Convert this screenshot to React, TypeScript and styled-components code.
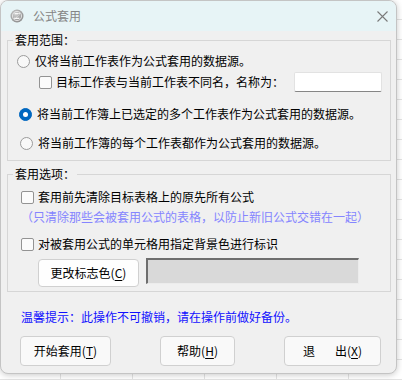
import React from "react";
import styled, { createGlobalStyle } from "styled-components";

const GlobalStyle = createGlobalStyle`
  html, body {
    margin: 0;
    padding: 0;
    width: 402px;
    height: 380px;
    overflow: hidden;
    background-color: #ffffff;
    background-image:
      linear-gradient(to right, #e3e3e3 1px, transparent 1px),
      linear-gradient(to bottom, #e3e3e3 1px, transparent 1px);
    background-size: 72px 20px;
    background-position: 60px 0, 0 19px;
    font-family: "Noto Sans CJK SC", "Noto Sans", sans-serif;
  }
`;

const Dialog = styled.div`
  width: 397px;
  height: 374px;
  box-sizing: border-box;
  background: #f0f0f0;
  border: 1px solid #c4c4c4;
  border-radius: 8px;
  box-shadow: 0 1px 6px rgba(0, 0, 0, 0.22);
  display: flex;
  flex-direction: column;
  overflow: hidden;
  font-size: 12px;
  color: #000;
`;

const TitleBar = styled.div`
  height: 30px;
  flex-shrink: 0;
  background: #e7f4f6;
  display: flex;
  align-items: center;
  padding: 0 0 0 9px;
`;

const TitleText = styled.span`
  margin-left: 9px;
  color: #858585;
  font-size: 12px;
  line-height: 16px;
`;

const CloseBtn = styled.div`
  margin-left: auto;
  width: 28px;
  height: 30px;
  display: flex;
  align-items: center;
  justify-content: center;
`;

const Body = styled.div`
  flex: 1;
  display: flex;
  flex-direction: column;
  padding: 1px 5px 0 6px;
`;

const Group = styled.fieldset<{ gap?: number }>`
  margin: ${(p) => p.gap || 0}px 0 0 0;
  padding: 0;
  border: 1px solid #d6d6d6;
  min-width: 0;
`;

const Legend = styled.legend`
  margin-left: 5px;
  padding: 0 2px;
  font-size: 12px;
  line-height: 16px;
  color: #000;
`;

const GroupContent = styled.div<{ top: number; bottom: number }>`
  display: flex;
  flex-direction: column;
  padding: ${(p) => p.top}px 0 ${(p) => p.bottom}px 0;
`;

const Row = styled.div<{ indent: number; mt?: number; h?: number }>`
  display: flex;
  align-items: center;
  height: ${(p) => p.h || 20}px;
  margin-top: ${(p) => p.mt || 0}px;
  padding-left: ${(p) => p.indent}px;
  white-space: nowrap;
  line-height: 16px;
`;

const Radio = styled.span<{ checked?: boolean }>`
  width: 13px;
  height: 13px;
  box-sizing: border-box;
  border-radius: 50%;
  flex-shrink: 0;
  margin-right: 5px;
  border: 1px solid ${(p) => (p.checked ? "#0067c0" : "#9b9b9b")};
  background: ${(p) => (p.checked ? "#0067c0" : "#f8f8f8")};
  display: flex;
  align-items: center;
  justify-content: center;
  &::after {
    content: "";
    display: ${(p) => (p.checked ? "block" : "none")};
    width: 5px;
    height: 5px;
    border-radius: 50%;
    background: #ffffff;
  }
`;

const Check = styled.span`
  width: 13px;
  height: 13px;
  box-sizing: border-box;
  border: 1px solid #939393;
  border-radius: 2px;
  background: #fbfbfb;
  flex-shrink: 0;
  margin-right: 4px;
`;

const NameInput = styled.div`
  width: 88px;
  height: 20px;
  box-sizing: border-box;
  margin-left: 10px;
  background: #ffffff;
  border: 1px solid #e2e2e2;
  border-bottom: 1px solid #868686;
  border-radius: 2px;
`;

const Note = styled.div`
  height: 20px;
  line-height: 20px;
  padding-left: 13px;
  color: #8585ff;
  white-space: nowrap;
`;

const ColorRow = styled.div`
  display: flex;
  align-items: flex-start;
  margin-top: 5px;
  padding-left: 30px;
  gap: 7px;
`;

const Button = styled.div<{ w: number; h: number; bg?: string }>`
  width: ${(p) => p.w}px;
  height: ${(p) => p.h}px;
  box-sizing: border-box;
  background: ${(p) => p.bg || "#fdfdfd"};
  border: 1px solid #d0d0d0;
  border-radius: 4px;
  display: flex;
  align-items: center;
  justify-content: center;
  font-size: 12px;
  line-height: 16px;
  white-space: nowrap;
  u {
    text-underline-offset: 2px;
  }
`;

const ColorSwatch = styled.div`
  width: 213px;
  height: 26px;
  margin-top: -1px;
  box-sizing: border-box;
  background: #d9d9d9;
  border-top: 2px solid #6e6e6e;
  border-left: 2px solid #6e6e6e;
  border-right: 1px solid #ececec;
  border-bottom: 1px solid #ececec;
`;

const Hint = styled.div`
  margin-top: 15px;
  height: 20px;
  line-height: 20px;
  padding-left: 14px;
  color: #1010ff;
  white-space: nowrap;
`;

const ButtonBar = styled.div`
  display: flex;
  justify-content: space-between;
  margin-top: 9px;
  padding: 0 10px 0 13px;
`;

const Gap = styled.span<{ w: number }>`
  display: inline-block;
  width: ${(p) => p.w}px;
`;

const AppIcon = () => (
  <svg width="14" height="14" viewBox="0 0 14 14">
    <defs>
      <radialGradient id="ig" cx="40%" cy="35%" r="70%">
        <stop offset="0" stopColor="#d0d0d0" />
        <stop offset="1" stopColor="#8a8a8a" />
      </radialGradient>
    </defs>
    <circle cx="7" cy="7" r="6.5" fill="url(#ig)" />
    <circle cx="7" cy="7" r="4.6" fill="none" stroke="#ededed" strokeWidth="0.8" />
    <path d="M4.6 4.6 H9.3 L4.7 9.4 H9.4" fill="none" stroke="#f6f6f6" strokeWidth="1.3" strokeLinejoin="round" />
    <path d="M5 8.6 L9 4.8" stroke="#777" strokeWidth="0.6" />
  </svg>
);

const CloseIcon = () => (
  <svg width="11" height="11" viewBox="0 0 11 11">
    <path d="M0.5 0.5 L10.5 10.5 M10.5 0.5 L0.5 10.5" stroke="#7a7a7a" strokeWidth="1.1" />
  </svg>
);

export default function App() {
  return (
    <>
      <GlobalStyle />
      <Dialog>
        <TitleBar>
          <AppIcon />
          <TitleText>公式套用</TitleText>
          <CloseBtn>
            <CloseIcon />
          </CloseBtn>
        </TitleBar>
        <Body>
          <Group>
            <Legend>套用范围：</Legend>
            <GroupContent top={3} bottom={7}>
              <Row indent={9}>
                <Radio />
                仅将当前工作表作为公式套用的数据源。
              </Row>
              <Row indent={31} mt={1}>
                <Check />
                目标工作表与当前工作表不同名，名称为：
                <NameInput />
              </Row>
              <Row indent={11} mt={12}>
                <Radio checked />
                将当前工作簿上已选定的多个工作表作为公式套用的数据源。
              </Row>
              <Row indent={12} mt={9}>
                <Radio />
                将当前工作簿的每个工作表都作为公式套用的数据源。
              </Row>
            </GroupContent>
          </Group>

          <Group gap={5}>
            <Legend>套用选项：</Legend>
            <GroupContent top={5} bottom={4}>
              <Row indent={13}>
                <Check />
                套用前先清除目标表格上的原先所有公式
              </Row>
              <Note>（只清除那些会被套用公式的表格，以防止新旧公式交错在一起）</Note>
              <Row indent={13} mt={7}>
                <Check />
                对被套用公式的单元格用指定背景色进行标识
              </Row>
              <ColorRow>
                <Button w={101} h={28} bg="#fefefe">
                  更改标志色(<u>C</u>)
                </Button>
                <ColorSwatch />
              </ColorRow>
            </GroupContent>
          </Group>

          <Hint>温馨提示：此操作不可撤销，请在操作前做好备份。</Hint>

          <ButtonBar>
            <Button w={91} h={30} bg="#f9f9f9">
              开始套用(<u>T</u>)
            </Button>
            <Button w={75} h={30} bg="#f9f9f9">
              帮助(<u>H</u>)
            </Button>
            <Button w={97} h={30} bg="#f9f9f9">
              退<Gap w={20} />出(<u>X</u>)
            </Button>
          </ButtonBar>
        </Body>
      </Dialog>
    </>
  );
}
